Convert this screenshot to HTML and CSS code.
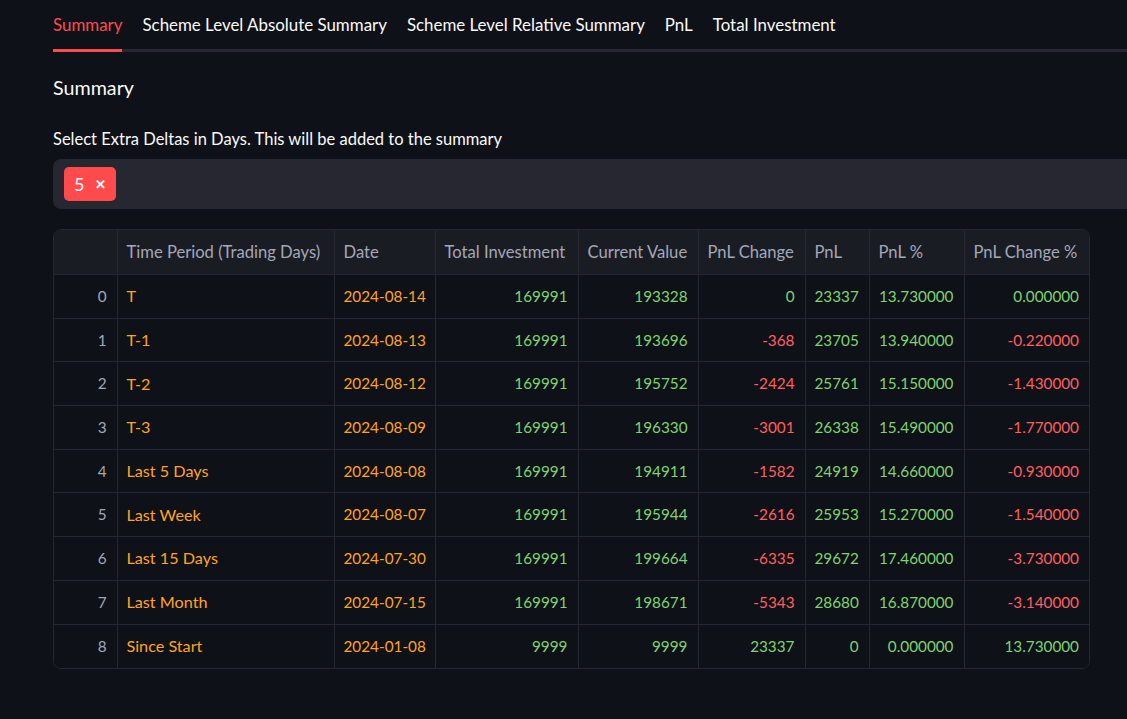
FILE: index.html
```html
<!DOCTYPE html>
<html>
<head>
<meta charset="utf-8">
<link rel="stylesheet" href="styles.css">
</head>
<body>
<div class="page">
  <div class="tabs">
    <div class="tab active">Summary</div>
    <div class="tab">Scheme Level Absolute Summary</div>
    <div class="tab">Scheme Level Relative Summary</div>
    <div class="tab">PnL</div>
    <div class="tab">Total Investment</div>
  </div>
  <h3 class="heading">Summary</h3>
  <div class="label">Select Extra Deltas in Days. This will be added to the summary</div>
  <div class="select">
    <span class="chip">5<span class="x">✕</span></span>
  </div>
  <div class="grid">
    <table>
      <thead>
        <tr>
          <th class="idx"></th>
          <th class="c1">Time Period (Trading Days)</th>
          <th class="c2">Date</th>
          <th class="c3">Total Investment</th>
          <th class="c4">Current Value</th>
          <th class="c5">PnL Change</th>
          <th class="c6">PnL</th>
          <th class="c7">PnL %</th>
          <th class="c8">PnL Change %</th>
        </tr>
      </thead>
      <tbody>
        <tr><td class="idx">0</td><td class="o">T</td><td class="o r">2024-08-14</td><td class="g r">169991</td><td class="g r">193328</td><td class="g r">0</td><td class="g r">23337</td><td class="g r">13.730000</td><td class="g r">0.000000</td></tr>
        <tr><td class="idx">1</td><td class="o">T-1</td><td class="o r">2024-08-13</td><td class="g r">169991</td><td class="g r">193696</td><td class="n r">-368</td><td class="g r">23705</td><td class="g r">13.940000</td><td class="n r">-0.220000</td></tr>
        <tr><td class="idx">2</td><td class="o">T-2</td><td class="o r">2024-08-12</td><td class="g r">169991</td><td class="g r">195752</td><td class="n r">-2424</td><td class="g r">25761</td><td class="g r">15.150000</td><td class="n r">-1.430000</td></tr>
        <tr><td class="idx">3</td><td class="o">T-3</td><td class="o r">2024-08-09</td><td class="g r">169991</td><td class="g r">196330</td><td class="n r">-3001</td><td class="g r">26338</td><td class="g r">15.490000</td><td class="n r">-1.770000</td></tr>
        <tr><td class="idx">4</td><td class="o">Last 5 Days</td><td class="o r">2024-08-08</td><td class="g r">169991</td><td class="g r">194911</td><td class="n r">-1582</td><td class="g r">24919</td><td class="g r">14.660000</td><td class="n r">-0.930000</td></tr>
        <tr><td class="idx">5</td><td class="o">Last Week</td><td class="o r">2024-08-07</td><td class="g r">169991</td><td class="g r">195944</td><td class="n r">-2616</td><td class="g r">25953</td><td class="g r">15.270000</td><td class="n r">-1.540000</td></tr>
        <tr><td class="idx">6</td><td class="o">Last 15 Days</td><td class="o r">2024-07-30</td><td class="g r">169991</td><td class="g r">199664</td><td class="n r">-6335</td><td class="g r">29672</td><td class="g r">17.460000</td><td class="n r">-3.730000</td></tr>
        <tr><td class="idx">7</td><td class="o">Last Month</td><td class="o r">2024-07-15</td><td class="g r">169991</td><td class="g r">198671</td><td class="n r">-5343</td><td class="g r">28680</td><td class="g r">16.870000</td><td class="n r">-3.140000</td></tr>
        <tr><td class="idx">8</td><td class="o">Since Start</td><td class="o r">2024-01-08</td><td class="g r">9999</td><td class="g r">9999</td><td class="g r">23337</td><td class="g r">0</td><td class="g r">0.000000</td><td class="g r">13.730000</td></tr>
      </tbody>
    </table>
  </div>
</div>
</body>
</html>
```

FILE: styles.css
```css
html, body {
  margin: 0;
  padding: 0;
  background: #0e1117;
  overflow: hidden;
}
body {
  font-family: "Lato", "Noto Sans", sans-serif;
  color: #fafafa;
}
.page {
  width: 1200px;
  padding: 0 0 0 53px;
  box-sizing: border-box;
}
.tabs {
  display: flex;
  gap: 20px;
  border-bottom: 3px solid #262730;
  height: 49px;
  box-sizing: content-box;
}
.tab {
  font-size: 16.9px;
  line-height: 20px;
  padding-top: 15px;
  height: 35px;
  box-sizing: border-box;
  color: #fafafa;
  white-space: nowrap;
  position: relative;
}
.tab.active {
  color: #ff4b4b;
}
.tab.active::after {
  content: "";
  position: absolute;
  left: 0;
  right: 0;
  bottom: -17px;
  height: 3px;
  background: #ff4b4b;
}
.heading {
  margin: 0;
  padding-top: 24px;
  font-size: 19.7px;
  font-weight: 400;
  line-height: 24px;
}
.label {
  margin-top: 29px;
  font-size: 16.5px;
  line-height: 20px;
}
.select {
  margin-top: 10px;
  height: 50px;
  background: #262730;
  border-radius: 8px;
  display: flex;
  align-items: center;
  padding-left: 11px;
}
.chip {
  background: #ff4b4b;
  color: #fff;
  border-radius: 5px;
  height: 34px;
  padding: 0 10px;
  display: inline-flex;
  align-items: center;
  gap: 11px;
  font-size: 18px;
}
.chip .x {
  font-size: 13px;
  font-weight: 700;
}
.grid {
  margin-top: 20px;
  width: 1037px;
  border: 1px solid #262730;
  border-radius: 8px;
  overflow: hidden;
  box-sizing: border-box;
}
table {
  border-collapse: collapse;
  width: 1035px;
  table-layout: fixed;
  font-size: 16.2px;
}
th, td {
  border: 1px solid #262730;
  padding: 0 10px 1px 9px;
  white-space: nowrap;
  overflow: hidden;
  box-sizing: border-box;
}
tr > :first-child { border-left: none; }
tr > :last-child { border-right: none; }
thead tr > * { border-top: none; }
tbody tr:last-child > * { border-bottom: none; }
th {
  background: #1a1c24;
  color: #a3a8b8;
  font-weight: 400;
  font-size: 16.6px;
  height: 44.5px;
  text-align: left;
}
td {
  height: 43.7px;
  background: #0e1117;
}
td.r, td.idx { font-size: 15.3px; }
.r { text-align: right; }
.idx { width: 63px; }
.c1 { width: 217px; }
.c2 { width: 101px; }
.c3 { width: 143px; }
.c4 { width: 120px; }
.c5 { width: 107px; }
.c6 { width: 64px; }
.c7 { width: 95px; }
.c8 { width: 125px; }
td.idx { color: #a3a8b8; text-align: right; }
.o { color: #ffa41c; }
.g { color: #7fd46f; }
.n { color: #ff5f5f; }
```
